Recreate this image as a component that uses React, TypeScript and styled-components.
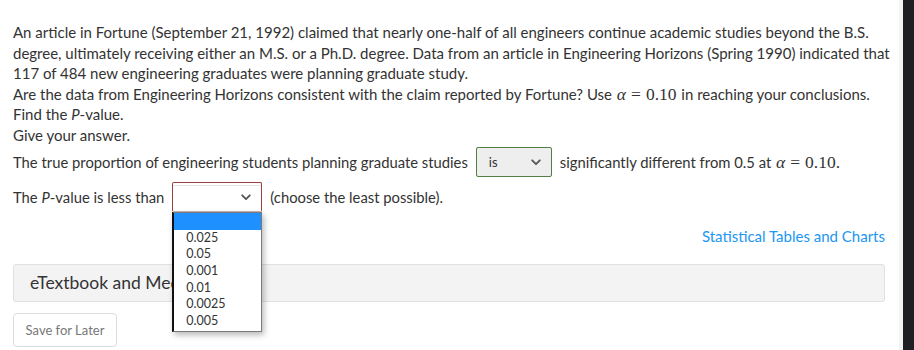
import React from 'react';
import styled, { createGlobalStyle } from 'styled-components';

const GlobalStyle = createGlobalStyle`
  html, body {
    margin: 0;
    padding: 0;
    background: #fff;
  }
  body {
    font-family: Lato, "Liberation Sans", sans-serif;
    color: #333;
  }
`;

const Frame = styled.div`
  display: flex;
  width: 914px;
  height: 350px;
  overflow: hidden;
`;

const Page = styled.div`
  flex: 1;
  min-width: 0;
  padding: 22px 14px 0 13px;
  border-right: 4px solid #f4f4f4;
  font-size: 15px;
  line-height: 20.5px;
`;

const ScrollStrip = styled.div`
  width: 11px;
  background: #1f2023;
`;

const Question = styled.p`
  margin: 0;
  white-space: nowrap;
`;

const Italic = styled.i`
  font-style: italic;
`;

const Math = styled.span`
  font-family: "Liberation Serif", "Times New Roman", serif;
  font-size: 17.5px;
  padding: 0 1px;

  i {
    font-style: italic;
  }

  b {
    font-weight: normal;
    margin: 0 5px;
  }
`;

const AnswerRow = styled.div<{ $top: number }>`
  display: flex;
  align-items: center;
  gap: 8px;
  margin-top: ${p => p.$top}px;
  height: 30px;
  font-size: 14.8px;
`;

const SelectWrap = styled.div`
  position: relative;
`;

const SelectBox = styled.div<{ $w: number; $bg: string; $border: string }>`
  box-sizing: border-box;
  width: ${p => p.$w}px;
  height: 30px;
  display: flex;
  align-items: center;
  justify-content: space-between;
  padding: 0 10px 0 12px;
  background: ${p => p.$bg};
  border: 1px solid ${p => p.$border};
  border-radius: 2px;
  font-size: 13px;
  color: #333;
`;

const FocusedBox = styled(SelectBox)`
  box-shadow: inset 0 2px 0 #fff, inset 0 3px 0 #e4e4e4;
  border-bottom-color: #c9b3b3;
`;

const OptionList = styled.ul`
  position: absolute;
  left: 0;
  top: 30px;
  width: 90px;
  box-sizing: border-box;
  margin: 0;
  padding: 0 0 1px;
  list-style: none;
  background: #fff;
  border: 1px solid #7a7a7a;
  border-left: 2px solid #111;
  box-shadow: 2px 3px 6px rgba(0, 0, 0, 0.28);
  z-index: 5;
`;

const Option = styled.li<{ $active?: boolean }>`
  height: 16.7px;
  line-height: 16.7px;
  padding-left: 12px;
  font-size: 12.5px;
  color: #333;
  background: ${p => (p.$active ? '#1e90ff' : 'transparent')};
`;

const LinkRow = styled.div`
  display: flex;
  justify-content: flex-end;
  margin-top: 14px;
  height: 20px;
`;

const TablesLink = styled.a`
  color: #2196f3;
  text-decoration: none;
  font-size: 15px;
`;

const MediaPanel = styled.div`
  box-sizing: border-box;
  margin-top: 18px;
  height: 38px;
  display: flex;
  align-items: center;
  padding-left: 16px;
  background: #f3f3f3;
  border: 1px solid #e0e0e0;
  border-radius: 3px;
  font-size: 17.5px;
  color: #333;
`;

const SaveButton = styled.button`
  box-sizing: border-box;
  margin-top: 11px;
  height: 34px;
  width: 104px;
  background: #fff;
  border: 1px solid #dcdcdc;
  border-radius: 4px;
  font-family: Lato, "Liberation Sans", sans-serif;
  font-size: 13px;
  color: #777;
`;

const Chevron = () => (
  <svg width="10" height="7" viewBox="0 0 10 7" fill="none">
    <path d="M1.2 1.3 5 5.1 8.8 1.3" stroke="#555" strokeWidth="1.8" strokeLinecap="round" strokeLinejoin="round" />
  </svg>
);

const AlphaEq = ({ value }: { value: string }) => (
  <Math>
    <i>α</i>
    <b>=</b>
    {value}
  </Math>
);

const options = ['0.025', '0.05', '0.001', '0.01', '0.0025', '0.005'];

export default function App() {
  return (
    <>
      <GlobalStyle />
      <Frame>
        <Page>
          <Question>
            An article in Fortune (September 21, 1992) claimed that nearly one-half of all engineers continue academic studies beyond the B.S.
            <br />
            degree, ultimately receiving either an M.S. or a Ph.D. degree. Data from an article in Engineering Horizons (Spring 1990) indicated that
            <br />
            117 of 484 new engineering graduates were planning graduate study.
            <br />
            Are the data from Engineering Horizons consistent with the claim reported by Fortune? Use <AlphaEq value="0.10" /> in reaching your conclusions.
            <br />
            Find the <Italic>P</Italic>-value.
            <br />
            Give your answer.
          </Question>

          <AnswerRow $top={2}>
            <span>The true proportion of engineering students planning graduate studies</span>
            <SelectBox $w={76} $bg="#eeeeee" $border="#4f7f45">
              <span>is</span>
              <Chevron />
            </SelectBox>
            <span>
              significantly different from 0.5 at <AlphaEq value="0.10." />
            </span>
          </AnswerRow>

          <AnswerRow $top={5}>
            <span>
              The <Italic>P</Italic>-value is less than
            </span>
            <SelectWrap>
              <FocusedBox $w={90} $bg="#fff" $border="#9a3f3f">
                <span />
                <Chevron />
              </FocusedBox>
              <OptionList>
                <Option $active>&nbsp;</Option>
                {options.map(o => (
                  <Option key={o}>{o}</Option>
                ))}
              </OptionList>
            </SelectWrap>
            <span>(choose the least possible).</span>
          </AnswerRow>

          <LinkRow>
            <TablesLink href="#">Statistical Tables and Charts</TablesLink>
          </LinkRow>

          <MediaPanel>eTextbook and Media</MediaPanel>

          <SaveButton>Save for Later</SaveButton>
        </Page>
        <ScrollStrip />
      </Frame>
    </>
  );
}
